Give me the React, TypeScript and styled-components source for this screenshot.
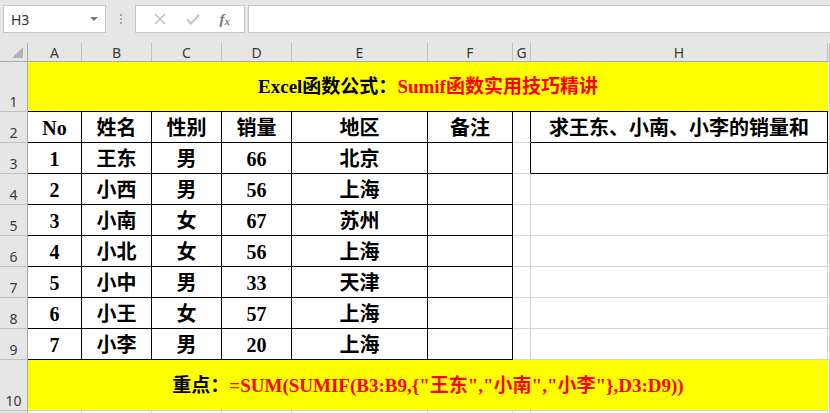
import styled, { createGlobalStyle } from "styled-components";

const GlobalStyle = createGlobalStyle`
  html, body {
    margin: 0;
    padding: 0;
    background: #ffffff;
  }
  body {
    font-family: "Liberation Sans", Arial, sans-serif;
  }
`;

const COLUMNS = ["A", "B", "C", "D", "E", "F", "G", "H"];
const HEADERS = ["No", "姓名", "性别", "销量", "地区", "备注"];

const ROWS: [number, string, string, number, string][] = [
  [1, "王东", "男", 66, "北京"],
  [2, "小西", "男", 56, "上海"],
  [3, "小南", "女", 67, "苏州"],
  [4, "小北", "女", 56, "上海"],
  [5, "小中", "男", 33, "天津"],
  [6, "小王", "女", 57, "上海"],
  [7, "小李", "男", 20, "上海"],
];

export default function App() {
  return (
    <>
      <GlobalStyle />
      <Window>
        <Toolbar>
          <NameBox>
            <span>H3</span>
            <Caret />
          </NameBox>
          <Grip>
            <i />
            <i />
            <i />
          </Grip>
          <FxBox>
            <svg width="12" height="12" viewBox="0 0 12 12">
              <path d="M1 1 L11 11 M11 1 L1 11" stroke="#c4c4c4" strokeWidth="1.6" fill="none" />
            </svg>
            <svg width="14" height="11" viewBox="0 0 14 11">
              <path d="M1 5.5 L5 9.5 L13 1" stroke="#c4c4c4" strokeWidth="2" fill="none" />
            </svg>
            <Fx>
              f<sub>x</sub>
            </Fx>
          </FxBox>
          <FormulaInput />
        </Toolbar>

        <Sheet>
          <Corner>
            <SelectAll />
          </Corner>
          {COLUMNS.map((c) => (
            <ColHead key={c}>{c}</ColHead>
          ))}
          <ColHead />

          <RowHead>1</RowHead>
          <Banner $top>
            Excel函数公式：<Red>Sumif函数实用技巧精讲</Red>
          </Banner>
          <Cell />

          <RowHead>2</RowHead>
          {HEADERS.map((h) => (
            <Cell key={h} $box>
              {h}
            </Cell>
          ))}
          <Cell $edge />
          <Cell $box>求王东、小南、小李的销量和</Cell>
          <Cell />

          {ROWS.map((r, i) => (
            <RowGroup key={r[0]} row={r} index={i} />
          ))}

          <RowHead>10</RowHead>
          <Banner>
            重点：<Red>=SUM(SUMIF(B3:B9,{"{"}"王东","小南","小李"{"}"},D3:D9))</Red>
          </Banner>
          <Cell />

          <RowHead />
          {COLUMNS.map((c) => (
            <Cell key={c} />
          ))}
          <Cell />
        </Sheet>
      </Window>
    </>
  );
}

function RowGroup({
  row,
  index,
}: {
  row: [number, string, string, number, string];
  index: number;
}) {
  return (
    <>
      <RowHead>{index + 3}</RowHead>
      {row.map((v, k) => (
        <Cell key={k} $box>
          {v}
        </Cell>
      ))}
      <Cell $box />
      <Cell $edge={index === 0} />
      <Cell $box={index === 0} />
      <Cell />
    </>
  );
}

const Window = styled.div`
  width: 830px;
  height: 413px;
  overflow: hidden;
  background: #e6e6e6;
  display: flex;
  flex-direction: column;
`;

const Toolbar = styled.div`
  height: 43px;
  flex: none;
  display: flex;
  align-items: flex-start;
  padding-top: 5px;
  box-sizing: border-box;
`;

const NameBox = styled.div`
  margin-left: 3px;
  width: 103px;
  height: 28px;
  box-sizing: border-box;
  background: #fff;
  border: 1px solid #c6c6c6;
  display: flex;
  align-items: center;
  justify-content: space-between;
  padding: 0 7px 0 7px;
  font-family: "Noto Sans", "Liberation Sans", sans-serif;
  font-size: 14px;
  color: #333;
`;

const Caret = styled.span`
  width: 0;
  height: 0;
  border-left: 4px solid transparent;
  border-right: 4px solid transparent;
  border-top: 4px solid #787878;
`;

const Grip = styled.div`
  width: 29px;
  height: 28px;
  display: flex;
  flex-direction: column;
  align-items: center;
  justify-content: center;
  gap: 2px;

  i {
    width: 2px;
    height: 2px;
    background: #a8a8a8;
  }
`;

const FxBox = styled.div`
  width: 110px;
  height: 28px;
  box-sizing: border-box;
  background: #fff;
  border: 1px solid #c6c6c6;
  display: flex;
  align-items: center;
  justify-content: space-around;
  padding: 0 4px 0 8px;
`;

const Fx = styled.span`
  font-family: "Liberation Serif", serif;
  font-style: italic;
  font-weight: bold;
  font-size: 15px;
  color: #7a7a7a;
  line-height: 1;

  sub {
    font-size: 11px;
    vertical-align: -1px;
  }
`;

const FormulaInput = styled.div`
  flex: 1;
  margin-left: 3px;
  height: 28px;
  box-sizing: border-box;
  background: #fff;
  border: 1px solid #c6c6c6;
  border-right: none;
`;

const Sheet = styled.div`
  flex: 1;
  display: grid;
  grid-template-columns: 28px 54px 70px 70px 70px 136px 85px 18px 297px 1fr;
  grid-template-rows: 19px 50px repeat(8, 31px) 51px 1fr;
  background: #fff;
`;

const Corner = styled.div`
  position: relative;
  background: #e6e6e6;
  border-right: 1px solid #ababab;
  border-bottom: 1px solid #ababab;
`;

const SelectAll = styled.div`
  position: absolute;
  right: 4px;
  bottom: 3px;
  width: 0;
  height: 0;
  border-left: 11px solid transparent;
  border-bottom: 11px solid #b4b4b4;
`;

const ColHead = styled.div`
  background: #e6e6e6;
  border-right: 1px solid #c0c0c0;
  border-bottom: 1px solid #ababab;
  display: flex;
  align-items: center;
  justify-content: center;
  font-family: "Noto Sans", "Liberation Sans", sans-serif;
  font-size: 14px;
  color: #3a3a3a;
  overflow: hidden;
`;

const RowHead = styled.div`
  background: #e6e6e6;
  border-right: 1px solid #ababab;
  border-bottom: 1px solid #c0c0c0;
  display: flex;
  align-items: flex-end;
  justify-content: center;
  font-family: "Noto Sans", "Liberation Sans", sans-serif;
  font-size: 14px;
  line-height: 18px;
  color: #3a3a3a;
  overflow: hidden;
`;

const Cell = styled.div<{ $box?: boolean; $edge?: boolean }>`
  box-sizing: border-box;
  border-right: 1px solid ${(p) => (p.$box || p.$edge ? "#000" : "#d4d4d4")};
  border-bottom: 1px solid ${(p) => (p.$box ? "#000" : "#d4d4d4")};
  display: flex;
  align-items: center;
  justify-content: center;
  padding-top: 2px;
  font-family: "Liberation Serif", "Noto Sans CJK SC", serif;
  font-weight: bold;
  font-size: 20px;
  line-height: 1;
  color: #000;
  white-space: nowrap;
  overflow: hidden;
`;

const Banner = styled.div<{ $top?: boolean }>`
  grid-column: span 8;
  background: #ffff00;
  border-bottom: 1px solid ${(p) => (p.$top ? "#000" : "#d4d4d4")};
  display: flex;
  align-items: center;
  justify-content: center;
  font-family: "Liberation Serif", "Noto Sans CJK SC", serif;
  font-weight: bold;
  font-size: 19px;
  line-height: 1;
  color: #000;
  white-space: nowrap;
`;

const Red = styled.span`
  color: #ff0000;
`;
